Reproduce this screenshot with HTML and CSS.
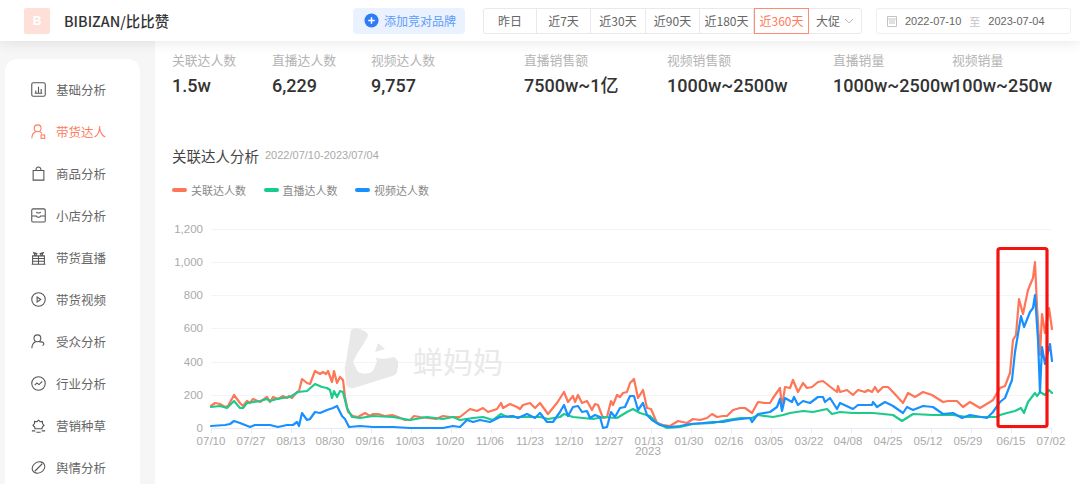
FILE: index.html
```html
<!DOCTYPE html>
<html lang="zh-CN">
<head>
<meta charset="utf-8">
<title>BIBIZAN/比比赞</title>
<link rel="stylesheet" href="styles.css">
</head>
<body>
<header class="topbar">
  <div class="logo">B</div>
  <div class="brand">BIBIZAN/比比赞</div>
  <button class="add-btn">
    <svg class="add-icon" viewBox="0 0 16 16"><circle cx="8" cy="8" r="7.5" fill="#2f7bf6"/><path d="M8 4.5v7M4.5 8h7" stroke="#fff" stroke-width="1.6"/></svg>
    添加竞对品牌
  </button>
  <div class="tabs">
    <span class="tab tab-first">昨日</span>
    <span class="tab">近7天</span>
    <span class="tab tab-wide">近30天</span>
    <span class="tab">近90天</span>
    <span class="tab">近180天</span>
    <span class="tab tab-active">近360天</span>
    <span class="tab tab-last">大促
      <svg class="chev" viewBox="0 0 10 6"><path d="M1 1l4 4 4-4" fill="none" stroke="#bbb" stroke-width="1"/></svg>
    </span>
  </div>
  <div class="dates">
    <svg class="cal" viewBox="0 0 10 12"><path d="M.5 1.5h9v10h-9zM.5 4h9M2 6h6M2 8h6" fill="none" stroke="#c4c4c4" stroke-width="1"/></svg>
    <span class="date">2022-07-10</span>
    <span class="date-to">至</span>
    <span class="date">2023-07-04</span>
  </div>
</header>

<div class="layout">
  <aside class="gutter">
    <nav class="sidenav">
      <a class="nav-item">
        <svg class="nav-icon" viewBox="0 0 14 14"><rect x=".7" y=".7" width="12.6" height="12.6" rx="1.5"/><path d="M3.500 10.500h7M4.500 10V8M7 10V4.500M9.500 10V6.500"/></svg>基础分析</a>
      <a class="nav-item nav-active">
        <svg class="nav-icon" viewBox="0 0 14 14"><circle cx="6.2" cy="4" r="3.2"/><path d="M.8 13.400c0-3.200 1.600-5.400 3.600-6.200M8.400 7.400c.8.3 1.500.8 2 1.500"/><rect x="9.400" y="10.200" width="3.400" height="3.200"/></svg>带货达人</a>
      <a class="nav-item">
        <svg class="nav-icon" viewBox="0 0 14 14"><path d="M2 4.200h10v9H2zM4.600 4.200c0-4.400 4.800-4.400 4.800 0"/></svg>商品分析</a>
      <a class="nav-item">
        <svg class="nav-icon" viewBox="0 0 14 14"><path d="M2 .8h10c.8 0 1.300.6 1.300 1.300v9.700c0 .8-.6 1.300-1.300 1.300H2c-.8 0-1.300-.6-1.300-1.300V2.100C.7 1.400 1.200.8 2 .8zM.7 7.500h4.300c.5 1.500 3.500 1.500 4 0h4.300M5 3.800c.5 1.200 3.500 1.200 4 0"/></svg>小店分析</a>
      <a class="nav-item">
        <svg class="nav-icon" viewBox="0 0 14 14"><path d="M.6 13.300h12.800M1.500 13V5.500h11V13M1.500 8h11M1.500 10.500h11M7 5.500V13M4 5.500L2.500 2.500l3 .8zM10 5.500l-1.500-2.200 3-.8z"/></svg>带货直播</a>
      <a class="nav-item">
        <svg class="nav-icon" viewBox="0 0 14 14"><circle cx="7" cy="7" r="6.300"/><path d="M5.700 4.700l3.400 2.300-3.400 2.300z"/></svg>带货视频</a>
      <a class="nav-item">
        <svg class="nav-icon" viewBox="0 0 14 14"><circle cx="6" cy="4" r="3.200"/><path d="M.8 13.300c0-3.300 1.700-5.300 3.500-6.100M7.700 7.200c1.800.4 3-.2 3.800.8.900 1.100.5 2.500-.8 2.700"/></svg>受众分析</a>
      <a class="nav-item">
        <svg class="nav-icon" viewBox="0 0 14 14"><circle cx="7" cy="7" r="6.300"/><path d="M3.500 8.500l2-2 2 1.500 3-3"/></svg>行业分析</a>
      <a class="nav-item">
        <svg class="nav-icon" viewBox="0 0 14 14"><path d="M7 2l1.500 1.500 2.200-.3.100 2.200 1.400 1.300-1.800 2-.1 1.300H3.700l-.1-1.300-1.800-2 1.400-1.300.1-2.200 2.200.3zM.8 12h3.200M10 12h3.200M5 13.300h4"/></svg>营销种草</a>
      <a class="nav-item">
        <svg class="nav-icon" viewBox="0 0 14 14"><ellipse cx="7" cy="7" rx="6.200" ry="5" transform="rotate(-30 7 7)"/><path d="M3.500 10.500L10.500 3.500"/></svg>舆情分析</a>
    </nav>
  </aside>

  <main class="main">
    <section class="stats">
      <div class="stat"><div class="stat-label">关联达人数</div><div class="stat-value">1.5w</div></div>
      <div class="stat"><div class="stat-label">直播达人数</div><div class="stat-value">6,229</div></div>
      <div class="stat"><div class="stat-label">视频达人数</div><div class="stat-value">9,757</div></div>
      <div class="stat"><div class="stat-label">直播销售额</div><div class="stat-value">7500w~1亿</div></div>
      <div class="stat"><div class="stat-label">视频销售额</div><div class="stat-value">1000w~2500w</div></div>
      <div class="stat"><div class="stat-label">直播销量</div><div class="stat-value">1000w~2500w</div></div>
      <div class="stat"><div class="stat-label">视频销量</div><div class="stat-value">100w~250w</div></div>
    </section>

    <div class="chart-head">
      <h2 class="chart-title">关联达人分析</h2>
      <span class="chart-range">2022/07/10-2023/07/04</span>
    </div>

    <div class="legend">
      <span class="legend-item"><i class="swatch swatch-red"></i>关联达人数</span>
      <span class="legend-item"><i class="swatch swatch-green"></i>直播达人数</span>
      <span class="legend-item"><i class="swatch swatch-blue"></i>视频达人数</span>
    </div>

    <svg class="chart" viewBox="155 215 925 269" width="925" height="269">
      <g class="grid">
        <path d="M211 229.500H1051M211 262.500H1051M211 295.500H1051M211 328.500H1051M211 362.500H1051M211 395.500H1051"/>
      </g>
      <path class="axis" d="M211 428.500H1051M211.500 428v5M251.500 428v5M291.500 428v5M331.500 428v5M371.500 428v5M411.500 428v5M451.500 428v5M491.500 428v5M531.500 428v5M571.500 428v5M611.500 428v5M651.500 428v5M691.500 428v5M731.500 428v5M771.500 428v5M811.500 428v5M851.500 428v5M891.500 428v5M931.500 428v5M971.500 428v5M1011.500 428v5M1051.500 428v5"/>

      <path class="wm-logo" d="M351 330Q355 327 360 329L366 332Q369 334 367 338L357 354L353 362L358 372Q366 376 373 371L377 361L376 358Q385 360 394 357Q399 360 398 366L397 372Q396 375 392 376L354 388Q348 389 346 384L345 372Q344 368 346 362Z"/>
      <path class="wm-logo" d="M378 343L385 349L375 352Z"/>
      <text class="wm-text" x="413" y="373">蝉妈妈</text>

      <g class="y-labels">
        <text x="203" y="233">1,200</text>
        <text x="203" y="266">1,000</text>
        <text x="203" y="299">800</text>
        <text x="203" y="332">600</text>
        <text x="203" y="366">400</text>
        <text x="203" y="399">200</text>
        <text x="203" y="432">0</text>
      </g>
      <g class="x-labels">
        <text x="211" y="445">07/10</text><text x="251" y="445">07/27</text><text x="291" y="445">08/13</text><text x="330" y="445">08/30</text><text x="370" y="445">09/16</text><text x="410" y="445">10/03</text><text x="450" y="445">10/20</text><text x="490" y="445">11/06</text><text x="530" y="445">11/23</text><text x="569" y="445">12/10</text><text x="609" y="445">12/27</text><text x="649" y="445">01/13</text><text x="689" y="445">01/30</text><text x="729" y="445">02/16</text><text x="769" y="445">03/05</text><text x="809" y="445">03/22</text><text x="848" y="445">04/08</text><text x="888" y="445">04/25</text><text x="928" y="445">05/12</text><text x="968" y="445">05/29</text><text x="1011" y="445">06/15</text><text x="1051" y="445">07/02</text>
        <text x="648" y="455">2023</text>
      </g>

      <polyline class="line line-red" points="211,406 215,403 220,404 225,407 228,406 234,395 240,403 243,406 247,401 250,403 253,399 260,402 267,397 270,402 273,397 278,399 283,396 287,398 289,396 292,398 297,392 299,391 302,379 307,383 310,384 315,371 320,374 323,372 326,374 328,371 332,382 334,371 337,383 340,377 343,380 345,397 348,412 353,416 358,417 365,413 370,416 373,414 378,414 385,416 392,415 398,417 405,420 410,420 414,416 420,417 428,418 436,419 443,416 450,417 460,417 470,409 477,411 483,408 488,412 497,409 501,403 503,408 510,404 517,407 520,409 523,405 530,403 535,408 540,403 548,414 557,403 564,392 568,402 573,396 575,402 578,395 582,403 587,401 592,410 595,404 598,405 603,418 607,417 611,401 613,405 617,395 620,397 623,393 627,392 630,383 634,379 638,398 643,390 647,408 651,409 657,423 663,425 670,426 678,421 687,423 693,419 700,420 707,418 712,414 717,417 723,416 727,416 733,410 740,408 745,408 752,413 758,402 765,403 770,403 773,398 780,388 782,407 785,387 790,388 793,380 798,392 803,383 807,388 812,387 818,382 823,381 828,385 837,392 838,386 840,392 847,390 853,395 858,390 865,392 868,390 872,392 875,387 878,392 883,387 888,387 893,392 903,403 908,393 915,397 923,392 932,395 943,402 948,401 957,401 963,407 970,402 980,408 990,402 993,400 1000,388 1005,386 1010,373 1013,340 1016,335 1019,299 1023,314 1028,290 1033,278 1035,262 1037,307 1040,355 1042,314 1045,333 1049,308 1052,329"/>
      <polyline class="line line-green" points="211,407 220,406 227,408 234,401 240,408 243,408 247,403 260,401 267,399 270,401 277,399 283,398 290,397 298,392 307,391 315,384 322,387 327,388 330,390 332,398 334,391 337,397 340,391 343,392 347,408 352,417 360,418 373,416 393,417 410,420 427,417 443,419 453,417 460,420 473,418 483,417 493,420 501,414 507,417 527,417 540,417 548,419 560,417 564,414 573,417 593,419 603,417 617,418 627,412 633,409 640,413 650,416 657,423 667,428 680,427 693,424 713,423 727,420 740,418 752,418 758,415 773,417 783,415 790,413 803,411 813,412 827,409 832,414 840,412 853,413 873,413 893,415 902,421 913,414 933,415 953,415 967,417 997,417 1000,415 1007,413 1015,411 1021,408 1024,413 1028,402 1035,393 1037,396 1040,392 1045,395 1049,390 1052,393"/>
      <polyline class="line line-blue" points="211,426 225,425 230,424 234,421 240,423 250,427 255,425 270,425 278,427 287,425 293,425 297,422 299,426 302,413 307,420 310,419 315,412 320,413 327,410 333,408 337,406 342,416 345,419 349,427 360,426 373,427 393,427 410,428 443,428 453,426 460,427 467,420 473,422 480,420 490,422 500,417 513,416 518,418 527,414 535,418 540,413 547,422 553,422 560,412 564,405 568,416 573,407 578,406 582,412 587,411 590,418 595,415 600,417 603,428 607,427 611,412 615,417 620,408 625,407 630,396 634,396 638,410 643,403 647,415 652,420 660,425 670,427 680,426 690,424 703,423 713,422 723,422 733,420 750,418 752,422 758,414 770,412 777,407 780,399 782,411 785,398 792,402 794,397 798,405 803,401 810,403 818,397 823,397 825,402 830,398 837,409 840,403 853,409 858,405 872,405 873,402 877,407 885,402 893,406 903,413 907,407 913,410 923,406 933,407 943,414 953,413 962,418 970,415 987,418 993,412 1000,402 1005,398 1012,380 1015,352 1021,316 1024,327 1030,312 1033,308 1035,295 1038,340 1040,392 1042,347 1045,364 1050,344 1052,361"/>
      <rect class="highlight" x="998" y="248.500" width="49" height="178" rx="2"/>
    </svg>
  </main>
</div>
</body>
</html>
```

FILE: styles.css
```css
* { box-sizing: border-box; }
html, body { margin: 0; padding: 0; height: 100%; overflow: hidden; }
body {
  font-family: "Noto Sans CJK SC", "Noto Sans", sans-serif;
  background: #f6f6f6;
  color: #333;
}

.topbar {
  position: relative;
  z-index: 2;
  display: flex;
  align-items: center;
  height: 41px;
  padding-left: 24px;
  background: #fff;
  box-shadow: 0 2px 14px rgba(0, 0, 0, .09);
}
.logo {
  width: 26px;
  height: 26px;
  border-radius: 2px;
  background: #ffe0d8;
  color: #fff;
  font: 700 12px/26px "Liberation Sans", sans-serif;
  text-align: center;
}
.brand {
  width: 289px;
  margin-left: 14px;
  font-size: 14.400px;
  font-weight: 500;
  color: #333;
  white-space: nowrap;
}
.add-btn {
  display: flex;
  align-items: center;
  gap: 5px;
  width: 112px;
  height: 26px;
  padding: 0 0 0 11px;
  border: 0;
  border-radius: 4px;
  background: #eaf2ff;
  color: #5f9cf8;
  font: 12px "Noto Sans CJK SC", sans-serif;
  white-space: nowrap;
}
.add-icon { width: 15px; height: 15px; flex: none; }

.tabs {
  display: flex;
  width: 379px;
  height: 26px;
  margin-left: 18px;
  border: 1px solid #e8e9ef;
  border-radius: 3px;
  font-size: 12px;
  color: #666;
}
.tab {
  flex: none;
  width: 54px;
  display: flex;
  align-items: center;
  justify-content: center;
  border-right: 1px solid #e8e9ef;
  white-space: nowrap;
}
.tab-first { width: 53px; }
.tab-wide { width: 55px; }
.tab-active {
  width: 55px;
  margin: -1px 0;
  border: 1px solid #ff8b70;
  color: #ff7b5c;
}
.tab-last { width: 52px; border-right: 0; gap: 4px; }
.chev { width: 10px; height: 6px; }

.dates {
  display: flex;
  align-items: center;
  width: 195px;
  height: 26px;
  margin-left: 14px;
  padding-left: 10px;
  border: 1px solid #eeeef2;
  border-radius: 3px;
  font-size: 11px;
  color: #666;
}
.cal { width: 10px; height: 12px; margin-right: 8px; }
.date { font-family: "Liberation Sans", sans-serif; white-space: nowrap; }
.date-to { margin: 0 8px; color: #c4c4c4; font-size: 11px; }

.layout { display: flex; height: 443px; }
.gutter { flex: none; width: 155px; padding: 18px 15px 0 5px; }
.sidenav {
  height: 440px;
  padding-top: 9px;
  border-radius: 12px;
  background: #fff;
}
.nav-item {
  display: flex;
  align-items: center;
  gap: 10px;
  height: 42px;
  padding-left: 26px;
  font-size: 12.500px;
  color: #666;
  white-space: nowrap;
}
.nav-icon {
  width: 15px;
  height: 15px;
  flex: none;
  fill: none;
  stroke: #555;
  stroke-width: 1;
}
.nav-active { color: #ff7b5c; }
.nav-active .nav-icon { stroke: #ff7b5c; }

.main {
  flex: 1;
  min-width: 0;
  background: #fff;
}
.stats {
  display: grid;
  grid-template-columns: 100px 99px 153px 143px 166px 119px 1fr;
  height: 60px;
  padding: 9px 0 0 17px;
}
.stat { min-width: 0; white-space: nowrap; }
.stat-label { font-size: 12.800px; line-height: 20px; color: #b4b4b4; }
.stat-value {
  font-family: Roboto, "Noto Sans CJK SC", sans-serif;
  font-size: 18px;
  font-weight: 500;
  line-height: 31px;
  color: #333;
}

.chart-head {
  display: flex;
  align-items: center;
  gap: 6px;
  height: 20px;
  margin: 44px 0 0 17px;
}
.chart-title { margin: 0; font-size: 14.500px; font-weight: 400; color: #444; }
.chart-range { font: 11px "Liberation Sans", sans-serif; color: #aaa; }

.legend {
  display: flex;
  gap: 17.500px;
  height: 20px;
  margin: 15px 0 0 17px;
  font-size: 11px;
  line-height: 20px;
  color: #888;
}
.legend-item { display: flex; align-items: center; gap: 4px; white-space: nowrap; }
.swatch { width: 15px; height: 4px; border-radius: 2px; }
.swatch-red { background: #ff7557; }
.swatch-green { background: #16cc8e; }
.swatch-blue { background: #1890ff; }

.chart { display: block; margin-top: 15px; }
.grid path { fill: none; stroke: #f4f4f6; stroke-width: 1; }
.axis { fill: none; stroke: #e8e9f2; stroke-width: 1; }
.wm-logo { fill: #e8e8e8; }
.wm-text { font-size: 30px; fill: #e9e9e9; }
.y-labels text {
  font: 11.500px "Liberation Sans", sans-serif;
  fill: #aaa;
  text-anchor: end;
}
.x-labels text {
  font: 11.500px "Liberation Sans", sans-serif;
  fill: #aaa;
  text-anchor: middle;
}
.line { fill: none; stroke-width: 2.200; stroke-linejoin: round; stroke-linecap: round; }
.line-red { stroke: #ff7557; }
.line-green { stroke: #1ccb8c; }
.line-blue { stroke: #1890ff; }
.highlight { fill: none; stroke: #f5130f; stroke-width: 3.200; }
```
